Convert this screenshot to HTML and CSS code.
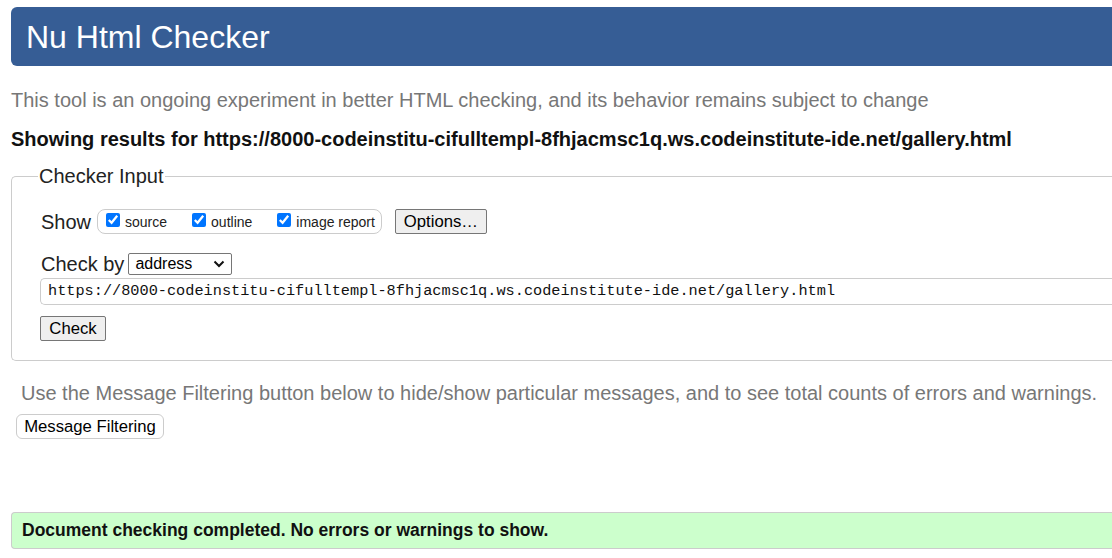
FILE: index.html
```html
<!DOCTYPE html>
<html lang="en">
<head>
<meta charset="utf-8">
<title>Nu Html Checker</title>
<link rel="stylesheet" href="styles.css">
</head>
<body>
<div class="page">
  <h1 class="title">Nu Html Checker</h1>
  <p class="tagline">This tool is an ongoing experiment in better HTML checking, and its behavior remains subject to change</p>
  <p class="results">Showing results for https://8000-codeinstitu-cifulltempl-8fhjacmsc1q.ws.codeinstitute-ide.net/gallery.html</p>
  <fieldset class="checker">
    <legend class="legend">Checker Input</legend>
    <div class="row show-row">
      <span class="label">Show</span>
      <span class="opts">
        <label class="opt"><input type="checkbox" checked> source</label>
        <label class="opt"><input type="checkbox" checked> outline</label>
        <label class="opt"><input type="checkbox" checked> image report</label>
      </span>
      <button class="btn options">Options…</button>
    </div>
    <div class="row by-row">
      <span class="label">Check by</span>
      <span class="select">address<svg class="chev" width="12" height="8" viewBox="0 0 12 8"><path d="M1.5 1.5 L6 6 L10.5 1.5" fill="none" stroke="#111" stroke-width="2"/></svg></span>
    </div>
    <div class="url">https://8000-codeinstitu-cifulltempl-8fhjacmsc1q.ws.codeinstitute-ide.net/gallery.html</div>
    <button class="btn check">Check</button>
  </fieldset>
  <p class="filter-note">Use the Message Filtering button below to hide/show particular messages, and to see total counts of errors and warnings.</p>
  <button class="btn filter">Message Filtering</button>
  <p class="success">Document checking completed. No errors or warnings to show.</p>
</div>
</body>
</html>
```
FILE: styles.css
```css
html, body {
  margin: 0;
  padding: 0;
  overflow: hidden;
  background: #fff;
}
body {
  font-family: "Liberation Sans", Arial, sans-serif;
  color: #111;
}
.page {
  width: 1300px;
  padding: 7px 0 0 11px;
}
.title {
  margin: 0;
  height: 59px;
  box-sizing: border-box;
  padding: 10px 0 0 15px;
  background: #365d95;
  color: #fff;
  font-weight: normal;
  font-size: 32px;
  line-height: 40px;
  border-radius: 6px 0 0 6px;
}
.tagline {
  margin: 20px 0 0;
  color: #777;
  font-size: 20px;
  line-height: 28px;
}
.results {
  margin: 14px 0 0;
  font-weight: bold;
  font-size: 20px;
  line-height: 22px;
}
.checker {
  margin: 15px 0 0;
  padding: 8px 0 19px 29px;
  border: 1px solid #ccc;
  border-right: none;
  border-radius: 5px 0 0 5px;
  min-width: 0;
}
.legend {
  padding: 0 1px;
  margin-left: -3px;
  font-size: 20px;
  color: #222;
}
.row {
  display: flex;
  align-items: center;
}
.label {
  font-size: 20px;
  line-height: 22px;
  color: #222;
}
.show-row {
  margin-top: 13px;
  height: 25px;
}
.opts {
  display: flex;
  align-items: center;
  margin-left: 6px;
  height: 23px;
  padding: 0 6px 0 8px;
  border: 1px solid #ccc;
  border-radius: 8px;
}
.opt {
  font-size: 14px;
  color: #222;
  display: flex;
  align-items: center;
  margin-right: 25px;
}
.opt:last-child { margin-right: 0; }
.opt input {
  margin: 0 5px 4px 0;
  width: 14px;
  height: 14px;
}
.btn {
  font-family: "Liberation Sans", Arial, sans-serif;
  font-size: 16.7px;
  color: #000;
  background: #efefef;
  border: 1px solid #767676;
  border-radius: 2px;
  padding: 0;
  height: 25px;
  line-height: 23px;
}
.options {
  margin-left: 13px;
  width: 92px;
}
.by-row {
  margin-top: 19px;
  height: 22px;
}
.select {
  display: flex;
  align-items: center;
  justify-content: space-between;
  margin-left: 4px;
  width: 104px;
  height: 22px;
  box-sizing: border-box;
  border: 1px solid #767676;
  border-radius: 2px;
  padding: 0 6px 0 6px;
  font-size: 16px;
  color: #000;
}
.url {
  margin: 3px 0 0 -1px;
  height: 27px;
  box-sizing: border-box;
  border: 1px solid #ccc;
  border-right: none;
  border-radius: 5px 0 0 5px;
  padding: 0 0 0 7px;
  font-family: "Liberation Mono", "DejaVu Sans Mono", monospace;
  font-size: 15.26px;
  line-height: 25px;
  color: #111;
}
.check {
  display: block;
  margin: 11px 0 0 -1px;
  width: 66px;
}
.filter-note {
  margin: 18px 0 0 10px;
  color: #777;
  font-size: 20px;
  line-height: 28px;
}
.filter {
  display: block;
  margin: 7px 0 0 5px;
  background: #fff;
  border: 1px solid #ccc;
  border-radius: 6px;
  width: 148px;
  height: 25px;
  padding: 0;
}
.success {
  margin: 73px 0 0;
  height: 37px;
  box-sizing: border-box;
  padding: 0 0 0 10px;
  background: #ccffcc;
  border: 1px solid #ccc;
  border-right: none;
  border-radius: 4px 0 0 4px;
  font-weight: bold;
  font-size: 17.5px;
  line-height: 35px;
}
```
